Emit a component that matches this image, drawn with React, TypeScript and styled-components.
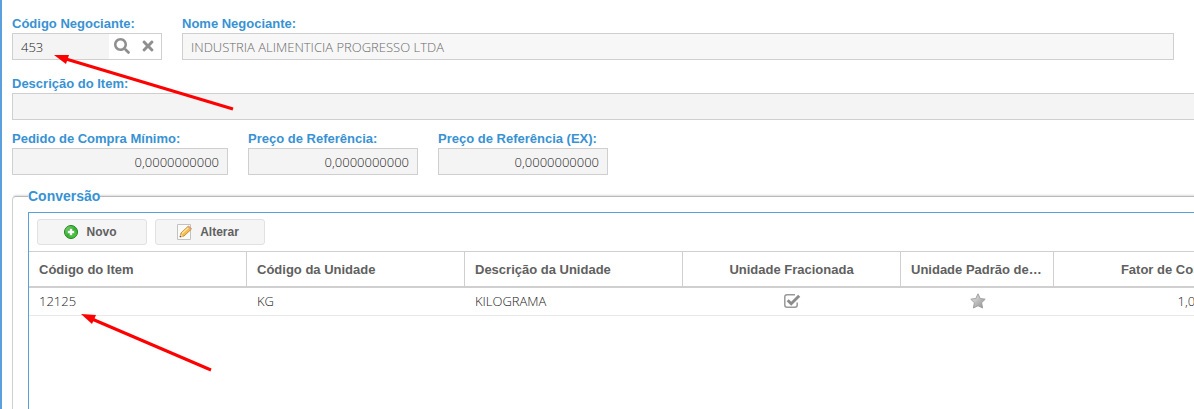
import React from 'react';
import styled, { createGlobalStyle } from 'styled-components';
import { FaSearch, FaTimes } from 'react-icons/fa';

const GlobalStyle = createGlobalStyle`
  * { box-sizing: border-box; }
  body { margin: 0; background: #fff; }
`;

const headingFont = '"Liberation Sans", Arial, sans-serif';
const valueFont = '"Open Sans", sans-serif';

const Page = styled.main`
  position: relative;
  display: flex;
  flex-direction: column;
  height: 100vh;
  padding: 15px 0 0 10px;
  border-left: 2px solid #5b9fdd;
  overflow: hidden;
  font: 13px/18px ${headingFont};
`;

const FieldRow = styled.div<{ $bleed?: boolean; $gap?: number }>`
  display: flex;
  gap: 20px;
  margin-bottom: ${(p) => p.$gap ?? 15}px;
  margin-right: ${(p) => (p.$bleed ? '-80px' : '20px')};
`;

const Field = styled.div<{ $width?: number }>`
  display: flex;
  flex-direction: column;
  flex: ${(p) => (p.$width ? `0 0 ${p.$width}px` : '1 1 0')};
  min-width: 0;
`;

const Label = styled.label`
  height: 18px;
  color: #3892d3;
  font-weight: bold;
  white-space: nowrap;
`;

const TextInput = styled.input<{ $numeric?: boolean }>`
  width: 100%;
  height: 27px;
  padding: 0 8px;
  border: 1px solid #cfcfcf;
  border-radius: 0;
  outline: 0;
  background: #f4f4f4;
  color: #222;
  font: 300 13px/18px ${valueFont};
  text-align: ${(p) => (p.$numeric ? 'right' : 'left')};
  &:disabled { background: #f7f7f7; color: #6a6a6a; }
`;

const LookupBox = styled.div`
  display: flex;
  height: 27px;
  border: 1px solid #cfcfcf;
  background: #fff;
`;

const LookupInput = styled(TextInput)`
  flex: 1;
  width: auto;
  min-width: 0;
  height: 25px;
  border: 0;
`;

const IconButton = styled.button`
  display: flex;
  align-items: center;
  justify-content: center;
  width: 26px;
  height: 25px;
  padding: 0 0 2px;
  border: 0;
  background: none;
  color: #8f8f8f;
`;

const Group = styled.fieldset`
  display: flex;
  flex: 1;
  flex-direction: column;
  min-width: 0;
  margin: 0 -80px 0 0;
  padding: 7px 0 0 15px;
  border: 1px solid #cfcfcf;
  border-top-color: #b9b9b9;
  border-bottom: 0;
  border-radius: 4px 4px 0 0;
  box-shadow: 0 -2px 2px -1px #ddd;
`;

const Legend = styled.legend`
  padding: 0;
  background: #fff;
  color: #3892d3;
  font: bold 14px/18px ${headingFont};
`;

const GridPanel = styled.section`
  flex: 1;
  border: 1px solid #5b9fdd;
  border-bottom: 0;
`;

const Toolbar = styled.div`
  display: flex;
  gap: 8px;
  padding: 6px 8px;
`;

const ToolButton = styled.button`
  display: flex;
  align-items: center;
  justify-content: center;
  gap: 8px;
  width: 110px;
  height: 26px;
  padding: 0 5px 0 0;
  border: 1px solid #e1e1e1;
  border-radius: 3px;
  background: #f5f5f5;
  color: #606060;
  font: bold 12px/16px ${headingFont};
`;

const DataTable = styled.table`
  width: 1243px;
  table-layout: fixed;
  border-collapse: separate;
  border-spacing: 0;
`;

type Align = 'left' | 'center' | 'right';

const HeaderCell = styled.th<{ $align?: Align }>`
  height: 37px;
  padding: 1px ${(p) => (p.$align === 'right' ? 28 : 10)}px 0 10px;
  border: solid #cfcfcf;
  border-width: 1px 1px 2px 0;
  overflow: hidden;
  color: #606060;
  text-align: ${(p) => p.$align ?? 'left'};
  text-overflow: ellipsis;
  white-space: nowrap;
`;

const Cell = styled.td<{ $align?: Align }>`
  height: 28px;
  padding: 0 10px 2px;
  border-bottom: 1px solid #e8e8e8;
  color: #222;
  font: 300 13px/18px ${valueFont};
  text-align: ${(p) => p.$align ?? 'left'};
  & > svg { display: block; margin: 0 auto; }
`;

const Arrows = styled.svg`
  position: absolute;
  top: 0;
  left: -2px;
  pointer-events: none;
`;

const AddIcon = () => (
  <svg width="16" height="16" viewBox="0 0 16 16" aria-hidden="true">
    <defs>
      <linearGradient id="green" x1="0" y1="0" x2="1" y2="1">
        <stop offset="0" stopColor="#8ed88a" />
        <stop offset="0.5" stopColor="#32b428" />
        <stop offset="1" stopColor="#54d648" />
      </linearGradient>
    </defs>
    <circle cx="8" cy="8" r="6.5" fill="url(#green)" stroke="#23801f" />
    <path d="M6.5 4.500h3v2h2v3h-2v2h-3v-2h-2v-3h2z" fill="#fff" stroke="#36a832" strokeWidth=".5" />
  </svg>
);

const EditIcon = () => (
  <svg width="16" height="16" viewBox="0 0 16 16" aria-hidden="true">
    <path d="M1.500.5h13v15h-13z" fill="#fafafa" stroke="#c2c2c2" />
    <path d="M4 13l1-4 7.500-7 3 3-7.500 7z" fill="#f4bd4d" stroke="#b77c25" strokeWidth=".8" />
    <path d="M6 9.500l7-6.300" stroke="#ffe79a" strokeWidth="1.200" />
    <path d="M11.500 3l3 3 1-1-3-3z" fill="#e79b83" />
    <path d="M4 13l.8-3 2.400 2.200z" fill="#efd6ae" />
    <path d="M3.700 13.300l.5-1.500 1 1z" fill="#333" />
  </svg>
);

const CheckIcon = () => (
  <svg width="18" height="16" viewBox="0 0 18 16" role="img" aria-label="Sim">
    <path d="M12 1.800H4Q1.800 1.800 1.800 4v8Q1.800 14.200 4 14.200h8Q14.200 14.200 14.200 12V9.500" fill="none" stroke="#999" strokeWidth="1.500" />
    <path d="M4.700 7.200l3.500 3.500 8-8" fill="none" stroke="#8c8c8c" strokeWidth="3" />
  </svg>
);

const StarIcon = () => (
  <svg width="16" height="16" viewBox="0 0 16 16" role="img" aria-label="Padrão">
    <defs>
      <linearGradient id="silver" x1="0" y1="0" x2="1" y2="1">
        <stop offset="0" stopColor="#eee" />
        <stop offset="1" stopColor="#8c8c8c" />
      </linearGradient>
    </defs>
    <path d="M8 .8l2.200 4.700 5 .7-3.600 3.500 1 5.300L8 12.700 3.400 15l1-5.300L.8 6.200l5-.7z" fill="url(#silver)" stroke="#a0a0a0" strokeWidth="1" strokeLinejoin="round" />
  </svg>
);

const columns: { title: string; width: number; align?: Align }[] = [
  { title: 'Código do Item', width: 218 },
  { title: 'Código da Unidade', width: 218 },
  { title: 'Descrição da Unidade', width: 218 },
  { title: 'Unidade Fracionada', width: 218, align: 'center' },
  { title: 'Unidade Padrão de Compra', width: 153, align: 'center' },
  { title: 'Fator de Conversão', width: 218, align: 'right' },
];

export default function App() {
  return (
    <>
      <GlobalStyle />
      <Page>
        <FieldRow>
          <Field $width={150}>
            <Label htmlFor="codigo">Código Negociante:</Label>
            <LookupBox>
              <LookupInput id="codigo" defaultValue="453" />
              <IconButton type="button" aria-label="Pesquisar"><FaSearch size={16} /></IconButton>
              <IconButton type="button" aria-label="Limpar"><FaTimes size={16} /></IconButton>
            </LookupBox>
          </Field>
          <Field>
            <Label htmlFor="nome">Nome Negociante:</Label>
            <TextInput id="nome" disabled defaultValue="INDUSTRIA ALIMENTICIA PROGRESSO LTDA" />
          </Field>
        </FieldRow>
        <FieldRow $bleed $gap={10}>
          <Field>
            <Label htmlFor="descricao">Descrição do Item:</Label>
            <TextInput id="descricao" />
          </Field>
        </FieldRow>
        <FieldRow $gap={12}>
          <Field $width={216}>
            <Label htmlFor="minimo">Pedido de Compra Mínimo:</Label>
            <TextInput id="minimo" $numeric defaultValue="0,0000000000" />
          </Field>
          <Field $width={170}>
            <Label htmlFor="preco">Preço de Referência:</Label>
            <TextInput id="preco" $numeric defaultValue="0,0000000000" />
          </Field>
          <Field $width={170}>
            <Label htmlFor="precoEx">Preço de Referência (EX):</Label>
            <TextInput id="precoEx" $numeric defaultValue="0,0000000000" />
          </Field>
        </FieldRow>
        <Group>
          <Legend>Conversão</Legend>
          <GridPanel>
            <Toolbar>
              <ToolButton type="button"><AddIcon />Novo</ToolButton>
              <ToolButton type="button"><EditIcon />Alterar</ToolButton>
            </Toolbar>
            <DataTable>
              <colgroup>
                {columns.map((c) => <col key={c.title} width={c.width} />)}
              </colgroup>
              <thead>
                <tr>
                  {columns.map((c) => <HeaderCell key={c.title} scope="col" $align={c.align}>{c.title}</HeaderCell>)}
                </tr>
              </thead>
              <tbody>
                <tr>
                  <Cell>12125</Cell>
                  <Cell>KG</Cell>
                  <Cell>KILOGRAMA</Cell>
                  <Cell $align="center"><CheckIcon /></Cell>
                  <Cell $align="center"><StarIcon /></Cell>
                  <Cell $align="right">1,0000000000</Cell>
                </tr>
              </tbody>
            </DataTable>
          </GridPanel>
        </Group>
        <Arrows width="240" height="380" viewBox="0 0 240 380" aria-hidden="true">
          <g stroke="#f00" strokeWidth="3" fill="#f00">
            <path d="M66 59L233 109" />
            <path d="M54 55l15 0-3 9z" stroke="none" />
            <path d="M92 319L211 370" />
            <path d="M81 314l15 1-4 9z" stroke="none" />
          </g>
        </Arrows>
      </Page>
    </>
  );
}
